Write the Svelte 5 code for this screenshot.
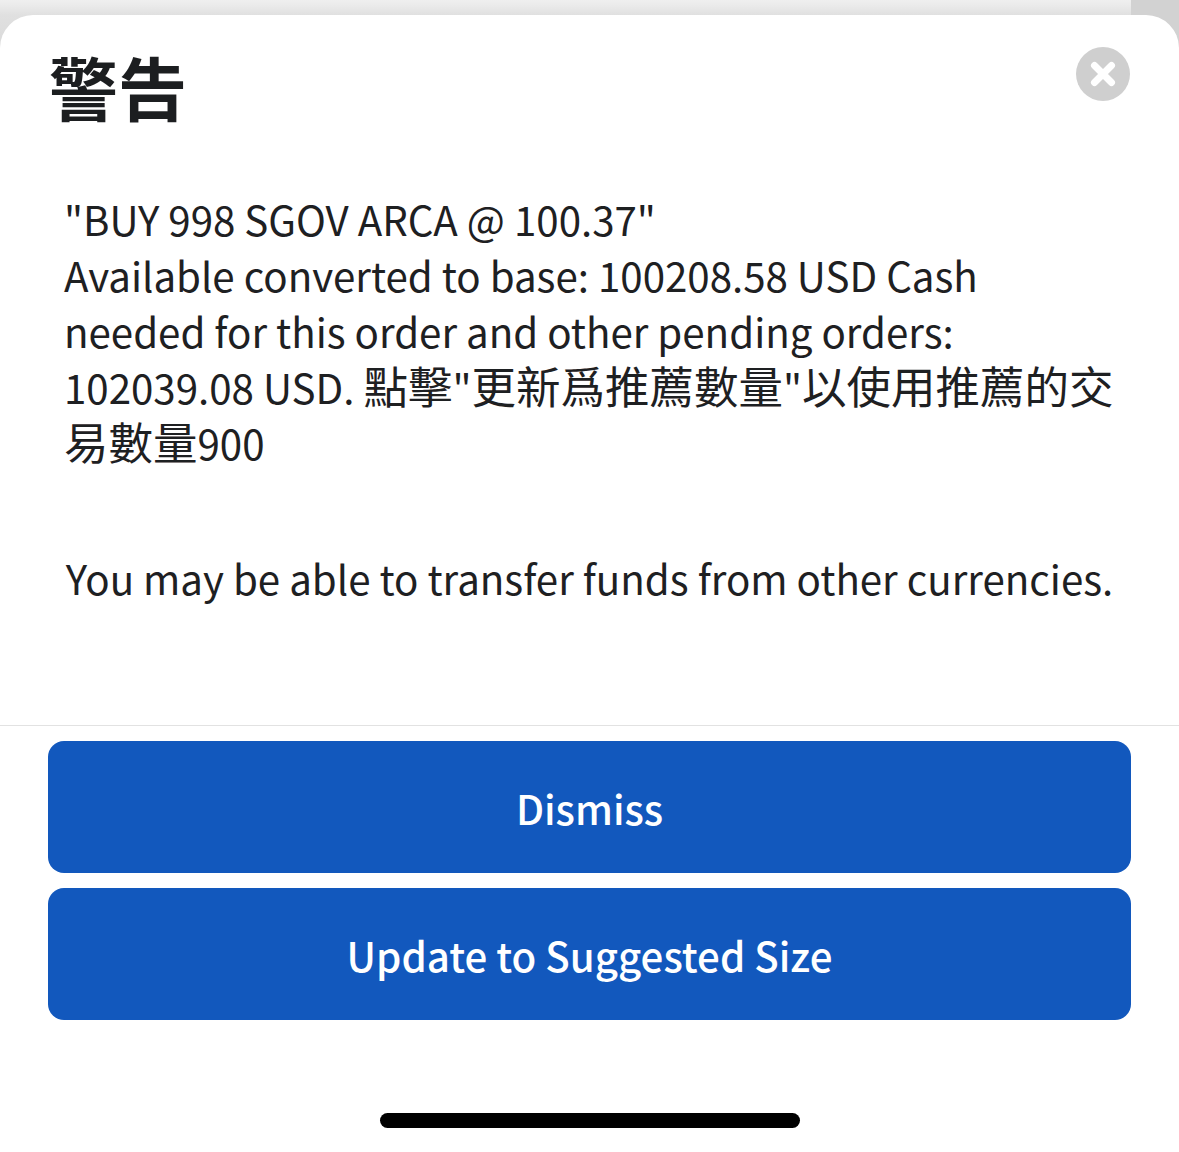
<script>
  const buttons = ['Dismiss', 'Update to Suggested Size'];
</script>

<div class="screen">
  <div class="backdrop"><div class="backdrop-side"></div></div>
  <section class="sheet">
    <header class="head">
      <h1>警告</h1>
      <button class="close" aria-label="Close">
        <svg viewBox="0 0 54 54" width="54" height="54">
          <circle cx="27" cy="27" r="27" fill="#cfcfcf" />
          <path d="M18.5 18.5 L35.5 35.5 M35.5 18.5 L18.5 35.5" stroke="#fff" stroke-width="7" stroke-linecap="round" />
        </svg>
      </button>
    </header>
    <div class="body">
      <p class="msg">"BUY 998 SGOV ARCA @ 100.37"<br />Available converted to base: 100208.58 USD Cash needed for this order and other pending orders: 102039.08 USD. <span class="cjk">點擊</span>"<span class="cjk">更新爲推薦數量</span>"<span class="cjk">以使用推薦的交易數量</span>900</p>
      <p class="note">You may be able to transfer funds from other currencies.</p>
    </div>
    <div class="actions">
      {#each buttons as label}
        <button class="primary">{label}</button>
      {/each}
    </div>
    <div class="home-row"><div class="home"></div></div>
  </section>
</div>

<style>
  :global(body) {
    margin: 0;
    background: #fff;
  }
  .screen {
    width: 1179px;
    height: 1152px;
    overflow: hidden;
    display: flex;
    flex-direction: column;
    font-family: "Noto Sans CJK TC", "Noto Sans", sans-serif;
    color: #1e2022;
    background: #fff;
  }
  .backdrop {
    height: 60px;
    flex: none;
    display: flex;
    justify-content: flex-end;
    background: linear-gradient(#efefef, #ebebeb 5px, #e0e0e0 15px, #d8d8d8);
  }
  .backdrop-side {
    width: 48px;
    background: #d2d2d2;
  }
  .sheet {
    flex: 1;
    margin-top: -45px;
    display: flex;
    flex-direction: column;
    background: #fff;
    border-radius: 33px 33px 0 0;
    min-height: 0;
  }
  .head {
    height: 135px;
    flex: none;
    display: flex;
    justify-content: space-between;
    align-items: flex-start;
    padding: 32px 48px 0 49px;
    box-sizing: border-box;
  }
  h1 {
    margin: -3px 0 0;
    font-size: 69px;
    line-height: 84px;
    font-weight: 700;
    color: #1c1e20;
  }
  .close {
    width: 54px;
    height: 54px;
    padding: 0;
    border: 0;
    background: none;
    display: block;
    margin-right: 1px;
  }
  .close svg { display: block; }
  .body {
    height: 576px;
    flex: none;
    box-sizing: border-box;
    padding: 41px 64px 0;
    border-bottom: 1px solid #e2e2e2;
  }
  .msg {
    margin: 0;
    font-size: 40.25px;
    line-height: 56px;
    font-weight: 400;
  }
  .cjk {
    font-size: 44.5px;
    line-height: 1;
  }
  .note {
    margin: 79px -20px 0;
    font-size: 40.25px;
    line-height: 56px;
    text-align: center;
  }
  .actions {
    display: flex;
    flex-direction: column;
    gap: 15px;
    padding: 15px 48px 0;
  }
  .primary {
    height: 132px;
    border: 0;
    border-radius: 16px;
    background: #1258bd;
    color: #fff;
    font-family: inherit;
    font-size: 40.25px;
    font-weight: 500;
    padding: 0;
  }
  .home-row {
    flex: 1;
    display: flex;
    justify-content: center;
    padding-top: 93px;
  }
  .home {
    width: 420px;
    height: 15px;
    border-radius: 8px;
    background: #000;
  }
</style>
